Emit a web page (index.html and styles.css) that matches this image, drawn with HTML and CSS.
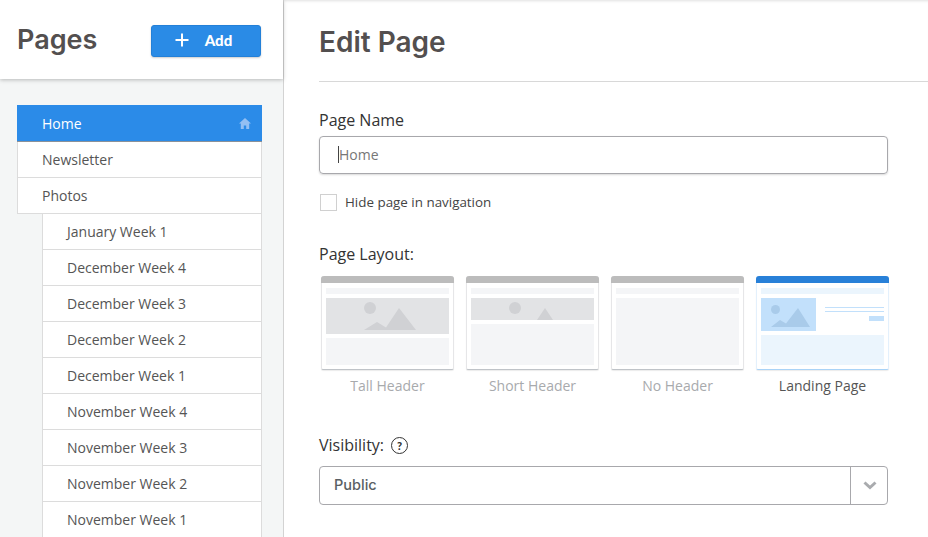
FILE: index.html
```html
<!DOCTYPE html>
<html lang="en">
<head>
    <meta charset="UTF-8">
    <title>Edit Page</title>
    <link rel="stylesheet" href="styles.css">
</head>
<body>
    <div class="app">
        <aside class="sidebar">
            <div class="sidebar-header">
                <h2>Pages</h2>
                <button class="btn-add" type="button">
                    <svg width="14" height="14" viewBox="0 0 14 14"><path d="M7 0.5v13M0.5 7h13" stroke="#fff" stroke-width="2"/></svg>
                    <span>Add</span>
                </button>
            </div>
            <ul class="page-list">
                <li class="page-item active">Home
                    <svg class="home-icon" width="12" height="11" viewBox="0 0 12 11"><path d="M6 0L0 5.5h1.800V11h3V7.500h2.400V11h3V5.500H12z" fill="#93bff3"/></svg>
                </li>
                <li class="page-item">Newsletter</li>
                <li class="page-item">Photos</li>
                <li class="page-item sub">January Week 1</li>
                <li class="page-item sub">December Week 4</li>
                <li class="page-item sub">December Week 3</li>
                <li class="page-item sub">December Week 2</li>
                <li class="page-item sub">December Week 1</li>
                <li class="page-item sub">November Week 4</li>
                <li class="page-item sub">November Week 3</li>
                <li class="page-item sub">November Week 2</li>
                <li class="page-item sub">November Week 1</li>
            </ul>
        </aside>

        <main class="main">
            <h1>Edit Page</h1>

            <label class="field-label">Page Name</label>
            <div class="text-input"><span class="caret"></span>Home</div>

            <div class="check-row">
                <span class="checkbox"></span>
                <span>Hide page in navigation</span>
            </div>

            <label class="field-label layout-label">Page Layout:</label>
            <div class="layouts">
                <div class="layout">
                    <div class="thumb">
                        <div class="thumb-bar"></div>
                        <div class="thumb-body">
                            <div class="thumb-nav"></div>
                            <div class="thumb-image tall">
                                <svg width="52" height="28" viewBox="0 0 52 28"><circle cx="6" cy="6" r="6" fill="#d0d1d4"/><path d="M0 28L13 20 22 25.500 35 6 52 28z" fill="#d0d1d4"/></svg>
                            </div>
                            <div class="thumb-block"></div>
                        </div>
                    </div>
                    <div class="layout-name">Tall Header</div>
                </div>
                <div class="layout">
                    <div class="thumb">
                        <div class="thumb-bar"></div>
                        <div class="thumb-body">
                            <div class="thumb-nav"></div>
                            <div class="thumb-image short">
                                <svg width="52" height="18" viewBox="0 0 52 18"><circle cx="6" cy="6" r="6" fill="#d0d1d4"/><path d="M28 18L36 6 44 18z" fill="#d0d1d4"/></svg>
                            </div>
                            <div class="thumb-block"></div>
                        </div>
                    </div>
                    <div class="layout-name">Short Header</div>
                </div>
                <div class="layout">
                    <div class="thumb">
                        <div class="thumb-bar"></div>
                        <div class="thumb-body">
                            <div class="thumb-nav"></div>
                            <div class="thumb-block"></div>
                        </div>
                    </div>
                    <div class="layout-name">No Header</div>
                </div>
                <div class="layout selected">
                    <div class="thumb">
                        <div class="thumb-bar"></div>
                        <div class="thumb-body">
                            <div class="thumb-nav"></div>
                            <div class="landing-row">
                                <div class="landing-image">
                                    <svg width="39" height="22" viewBox="0 0 39 22"><circle cx="4.500" cy="4.500" r="4.500" fill="#a9cbea"/><path d="M0 22L9 15 15 18.500 27 3 39 22z" fill="#a9cbea"/></svg>
                                </div>
                                <div class="landing-text">
                                    <div class="landing-line"></div>
                                    <div class="landing-line"></div>
                                    <div class="landing-btn"></div>
                                </div>
                            </div>
                            <div class="thumb-block"></div>
                        </div>
                    </div>
                    <div class="layout-name">Landing Page</div>
                </div>
            </div>

            <div class="visibility-label">
                <label class="field-label">Visibility:</label>
                <span class="help">?</span>
            </div>
            <div class="select">
                <span class="select-value">Public</span>
                <span class="select-arrow">
                    <svg width="14" height="9" viewBox="0 0 14 9"><path d="M1.500 1.500L7 6.500l5.500-5" fill="none" stroke="#a9abae" stroke-width="3"/></svg>
                </span>
            </div>
        </main>
    </div>
</body>
</html>
```

FILE: styles.css
```css
* {
    margin: 0;
    padding: 0;
    box-sizing: border-box;
}

body {
    font-family: "Open Sans", sans-serif;
    background: white;
    color: #333;
    height: 537px;
    overflow: hidden;
}

.app {
    display: flex;
    height: 537px;
    box-shadow: inset 0 3px 3px -2px rgba(0,0,0,0.12);
}

.sidebar {
    width: 284px;
    background: #f4f6f6;
    border-right: 1px solid #d3d3d3;
    flex-shrink: 0;
}

.sidebar-header {
    height: 79px;
    background: white;
    box-shadow: 0 1px 4px rgba(0,0,0,0.25);
    display: flex;
    align-items: center;
    justify-content: space-between;
    padding: 0 22px 0 17px;
    position: relative;
}

.sidebar-header h2 {
    font-family: Inter, sans-serif;
    font-size: 27px;
    font-weight: 600;
    color: #534f4f;
}

.btn-add {
    width: 110px;
    height: 32px;
    margin-top: 3px;
    padding: 0 5px 2px 0;
    background: #2a8be6;
    border: 1px solid #2380d8;
    border-radius: 3px;
    box-shadow: 0 1px 2px rgba(0,0,0,0.2);
    color: white;
    font-family: Lato, sans-serif;
    font-size: 15px;
    font-weight: 900;
    display: flex;
    align-items: center;
    justify-content: center;
    gap: 16px;
}

.page-list {
    list-style: none;
    margin: 26px 21px 0 17px;
}

.page-item {
    height: 36px;
    display: flex;
    align-items: center;
    justify-content: space-between;
    padding: 0 10px 0 24px;
    background: white;
    border: 1px solid #dcdcdc;
    border-top: none;
    font-size: 14px;
    color: #555;
}

.page-item.active {
    height: 37px;
    background: #2b8be8;
    border: none;
    border-bottom: 1px solid #8a9199;
    padding: 0 11px 0 25px;
    color: white;
}

.page-item.sub {
    margin-left: 25px;
}

.main {
    flex: 1;
    padding-left: 35px;
}

.main h1 {
    font-family: Inter, sans-serif;
    font-size: 28px;
    font-weight: 600;
    color: #534f4f;
    height: 82px;
    line-height: 84px;
    border-bottom: 1px solid #d8d8d8;
    margin-bottom: 26px;
}

.field-label {
    display: block;
    font-size: 16px;
    line-height: 24px;
    color: #333;
}

.text-input {
    width: 569px;
    height: 38px;
    margin-top: 4px;
    border: 1px solid #a8a8ac;
    border-radius: 4px;
    box-shadow: 0 1px 2px rgba(0,0,0,0.15);
    padding: 0 0 2px 18px;
    display: flex;
    align-items: center;
    font-size: 14px;
    color: #777;
}

.caret {
    width: 1px;
    height: 17px;
    background: #444;
}

.check-row {
    display: flex;
    align-items: center;
    gap: 8px;
    margin: 19px 0 0 1px;
    font-size: 13.400px;
    color: #444;
}

.checkbox {
    width: 17px;
    height: 17px;
    border: 1px solid #d0d0d0;
}

.layout-label {
    margin-top: 31px;
}

.layouts {
    display: flex;
    gap: 12px;
    margin: 10px 0 0 2px;
}

.layout {
    width: 133px;
}

.thumb {
    height: 94px;
    background: white;
    border: 1px solid #e6e6e8;
    border-top: none;
    border-bottom: 1px solid #bfc3c8;
    border-radius: 3px 3px 2px 2px;
    box-shadow: 0 1px 1px rgba(0,0,0,0.08);
    display: flex;
    flex-direction: column;
}

.thumb-bar {
    height: 7px;
    margin: 0 -1px;
    background: #bcbcbc;
    border-radius: 3px 3px 0 0;
}

.thumb-body {
    flex: 1;
    padding: 5px 4px 4px;
    display: flex;
    flex-direction: column;
    gap: 4px;
}

.thumb-nav {
    height: 6px;
    background: #f4f5f7;
}

.thumb-image {
    background: #e2e3e5;
    display: flex;
    justify-content: center;
    padding-left: 4px;
}

.thumb-image.tall {
    height: 36px;
    padding-top: 4px;
}

.thumb-image.short {
    height: 22px;
    padding-top: 4px;
}

.thumb-image svg {
    display: block;
}

.thumb-block {
    flex: 1;
    background: #f4f5f7;
}

.layout-name {
    text-align: center;
    font-size: 14px;
    line-height: 20px;
    margin-top: 6px;
    color: #a8aaad;
}

.selected .thumb {
    border-color: #e3f0fc;
    border-bottom-color: #a9d3f7;
}

.selected .thumb-bar {
    background: #2880d8;
}

.selected .thumb-nav,
.selected .thumb-block {
    background: #ebf5fd;
}

.selected .layout-name {
    color: #555;
}

.landing-row {
    display: flex;
    height: 33px;
}

.landing-image {
    width: 55px;
    background: #c2e0fb;
    padding: 7px 0 0 10px;
}

.landing-image svg {
    display: block;
}

.landing-text {
    flex: 1;
    padding: 9px 0 0 9px;
    display: flex;
    flex-direction: column;
    gap: 3px;
}

.landing-line {
    height: 1px;
    background: #c2e0fb;
}

.landing-btn {
    width: 15px;
    height: 5px;
    margin: 1px 0 0 auto;
    background: #c2e0fb;
}

.visibility-label {
    display: flex;
    align-items: center;
    gap: 7px;
    margin-top: 37px;
}

.help {
    width: 17px;
    height: 17px;
    border: 1px solid #333;
    border-radius: 50%;
    font-family: Lato, sans-serif;
    font-size: 11px;
    font-weight: 900;
    display: flex;
    align-items: center;
    justify-content: center;
}

.select {
    width: 569px;
    height: 39px;
    margin-top: 9px;
    border: 1px solid #a8a8ac;
    border-radius: 4px;
    display: flex;
    align-items: center;
    justify-content: space-between;
}

.select-value {
    font-family: Inter, sans-serif;
    font-size: 14.500px;
    font-weight: 500;
    color: #5a5f64;
    padding: 0 0 2px 14px;
}

.select-arrow {
    width: 37px;
    height: 100%;
    padding-left: 1px;
    border-left: 1px solid #a8a8ac;
    display: flex;
    align-items: center;
    justify-content: center;
}
```
